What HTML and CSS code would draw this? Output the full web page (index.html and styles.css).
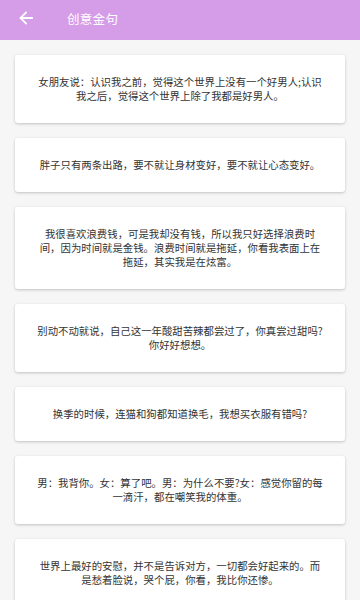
FILE: index.html
```html
<!DOCTYPE html>
<html lang="zh">
<head>
<meta charset="utf-8">
<link rel="stylesheet" href="styles.css">
</head>
<body>
<header class="bar">
  <svg class="back" width="14" height="14" viewBox="0 0 14 14"><path d="M13 7H2M7 1.5L1.5 7L7 12.5" fill="none" stroke="#fff" stroke-width="1.8" stroke-linecap="square"/></svg>
  <span class="title">创意金句</span>
</header>
<main class="list">
  <div class="card">女朋友说：认识我之前，觉得这个世界上没有一个好男人;认识我之后，觉得这个世界上除了我都是好男人。</div>
  <div class="card">胖子只有两条出路，要不就让身材变好，要不就让心态变好。</div>
  <div class="card">我很喜欢浪费钱，可是我却没有钱，所以我只好选择浪费时间，因为时间就是金钱。浪费时间就是拖延，你看我表面上在拖延，其实我是在炫富。</div>
  <div class="card">别动不动就说，自己这一年酸甜苦辣都尝过了，你真尝过甜吗?你好好想想。</div>
  <div class="card">换季的时候，连猫和狗都知道换毛，我想买衣服有错吗?</div>
  <div class="card">男：我背你。女：算了吧。男：为什么不要?女：感觉你留的每一滴汗，都在嘲笑我的体重。</div>
  <div class="card">世界上最好的安慰，并不是告诉对方，一切都会好起来的。而是愁着脸说，哭个屁，你看，我比你还惨。</div>
</main>
</body>
</html>
```
FILE: styles.css
```css
html, body {
  margin: 0;
  padding: 0;
}
body {
  background: #f6f6f6;
  font-family: "Noto Sans CJK SC", "Noto Sans", sans-serif;
  width: 360px;
  overflow: hidden;
}
.bar {
  height: 40px;
  background: #d59de8;
  display: flex;
  align-items: center;
  padding-left: 19px;
  box-sizing: border-box;
}
.back {
  display: block;
  margin-top: -4px;
}
.title {
  color: #fff;
  font-size: 12.5px;
  margin-left: 34px;
  margin-top: -4px;
  letter-spacing: 0.3px;
}
.list {
  display: flex;
  flex-direction: column;
  gap: 15px;
  padding: 15px 15px 20px;
}
.card {
  background: #fff;
  border-radius: 3px;
  box-shadow: 0 1px 3px rgba(0, 0, 0, 0.22);
  padding: 20px 21px;
  font-size: 10.4px;
  line-height: 14px;
  color: #333;
  text-align: center;
}
```
